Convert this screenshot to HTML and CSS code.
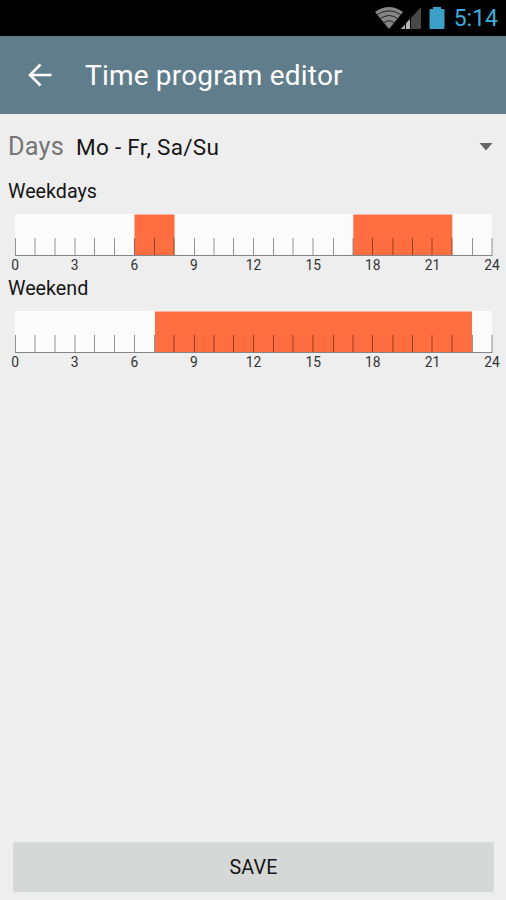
FILE: index.html
```html
<!DOCTYPE html>
<html lang="en">

<head>
    <meta charset="utf-8">
    <meta name="viewport" content="width=device-width, initial-scale=1">
    <title>Time program editor</title>
    <link rel="stylesheet" href="styles.css">
</head>

<body>
    <div class="status-bar">
        <svg class="wifi" width="28" height="22" viewBox="0 0 28 22">
            <path d="M0 5 Q14 -5 28 5 L14 22 Z" fill="#858585" />
            <path d="M1 8.500 Q14 -1 27 8.500 M4 12.500 Q14 4.500 24 12.500 M8 16.500 Q14 11 20 16.500" fill="none" stroke="#222" />
        </svg>
        <svg class="signal" width="20" height="22" viewBox="0 0 20 22">
            <path d="M20 0 V22 H0 Z" fill="#484848" />
            <path d="M9 12 V22 H0 Z" fill="#b5b5b5" />
            <path d="M4.500 15 V22 M9.500 9 V22" stroke="#000" />
        </svg>
        <svg class="battery" width="16" height="22" viewBox="0 0 16 22">
            <path d="M4 0 H12 V2 H14.500 Q15.500 2 15.500 3 V21 Q15.500 22 14.500 22 H1.500 Q0.500 22 0.500 21 V3 Q0.500 2 1.500 2 H4 Z" fill="#3c9fc8" />
        </svg>
        <span class="clock">5:14</span>
    </div>

    <header class="toolbar">
        <svg class="back" width="24" height="24" viewBox="0 0 24 24">
            <path d="M23.500 12 H2 M12.500 1.500 L2 12 L12.500 22.500" fill="none" stroke="#fff" stroke-width="2.600" />
        </svg>
        <h1>Time program editor</h1>
    </header>

    <main>
        <div class="days">
            <span class="days-label">Days</span>
            <span class="days-value">Mo - Fr, Sa/Su</span>
            <svg class="caret" width="14" height="8" viewBox="0 0 14 8">
                <path d="M0.500 0 H13.500 L7 7.500 Z" fill="#656565" />
            </svg>
        </div>

        <section class="program">
            <h2>Weekdays</h2>
            <svg class="timeline" width="478" height="43" viewBox="0 0 478 43">
                <rect width="477" height="42" fill="#fbfbfb" />
                <rect x="119.500" y="0.500" width="40" height="41.500" fill="#ff6e40" />
                <rect x="338.300" y="0.500" width="99" height="41.500" fill="#ff6e40" />
                <path class="ticks" d="M.5 24V41M20 24V41M40 24V41M60 24V41M79.500 24V41M99.500 24V41M119.500 24V41M139.500 24V41M159 24V41M179.500 24V41M199 24V41M218.500 24V41M238.500 24V41M258.500 24V41M278 24V41M298 24V41M318.500 24V41M338 24V41M357.500 24V41M378 24V41M397.500 24V41M417 24V41M437 24V41M457.500 24V41M477 24V41" />
                <path class="axis" d="M0 41.500H477.500" />
            </svg>
            <div class="hours">
                <span>0</span><span>3</span><span>6</span><span>9</span><span>12</span><span>15</span><span>18</span><span>21</span><span>24</span>
            </div>
        </section>

        <section class="program">
            <h2>Weekend</h2>
            <svg class="timeline" width="478" height="43" viewBox="0 0 478 43">
                <rect width="477" height="42" fill="#fbfbfb" />
                <rect x="140" y="0.500" width="317" height="41.500" fill="#ff6e40" />
                <path class="ticks" d="M.5 24V41M20 24V41M40 24V41M60 24V41M79.500 24V41M99.500 24V41M119.500 24V41M139.500 24V41M159 24V41M179.500 24V41M199 24V41M218.500 24V41M238.500 24V41M258.500 24V41M278 24V41M298 24V41M318.500 24V41M338 24V41M357.500 24V41M378 24V41M397.500 24V41M417 24V41M437 24V41M457.500 24V41M477 24V41" />
                <path class="axis" d="M0 41.500H477.500" />
            </svg>
            <div class="hours">
                <span>0</span><span>3</span><span>6</span><span>9</span><span>12</span><span>15</span><span>18</span><span>21</span><span>24</span>
            </div>
        </section>
    </main>

    <button class="save" type="button">SAVE</button>
</body>

</html>
```

FILE: styles.css
```css
* {
    box-sizing: border-box;
}

body {
    display: flex;
    flex-direction: column;
    height: 100vh;
    margin: 0;
    overflow: hidden;
    background: #eee;
    color: #151515;
    font-family: Roboto, "Liberation Sans", sans-serif;
}

h1,
h2 {
    margin: 0;
    font-weight: 400;
}

.status-bar {
    display: flex;
    align-items: center;
    justify-content: flex-end;
    height: 36px;
    padding: 0 8px 1px 0;
    background: #000;
}

.signal {
    margin-left: -2px;
}

.battery {
    margin: 0 9px 0 8px;
}

.clock {
    color: #3cabdc;
    font-size: 23px;
    line-height: 36px;
    padding-top: 3px;
}

.toolbar {
    display: flex;
    align-items: center;
    height: 78px;
    padding-left: 28px;
    background: #607d8b;
    color: #fff;
}

.toolbar h1 {
    margin-left: 33px;
    padding-top: 1px;
    font-size: 28px;
    letter-spacing: .2px;
}

main {
    flex: 1;
}

.days {
    display: flex;
    align-items: baseline;
    height: 62px;
    padding: 0 13px 0 8px;
    line-height: 66px;
}

.days-label {
    color: #757575;
    font-size: 25.3px;
    letter-spacing: .2px;
}

.days-value {
    margin-left: 12px;
    font-size: 22.5px;
    letter-spacing: .3px;
}

.caret {
    align-self: flex-start;
    margin: 29px 0 0 auto;
}

.program {
    height: 97px;
}

.program h2 {
    height: 38px;
    padding-left: 8px;
    font-size: 19.7px;
    line-height: 31px;
}

.timeline {
    display: block;
    margin-left: 15px;
}

.ticks {
    fill: none;
    stroke: #000;
    stroke-opacity: .42;
}

.axis {
    stroke: #858585;
}

.hours {
    display: flex;
    justify-content: space-between;
    width: 477px;
    margin-left: 15px;
    color: #333;
    font-size: 13.8px;
    line-height: 17px;
}

.hours span {
    display: flex;
    justify-content: center;
    width: 0;
}

.save {
    height: 50px;
    margin: 0 12px 8px 13px;
    padding: 1px 0 0;
    border: 0;
    border-radius: 2px;
    background: #d6d8d7;
    color: #151515;
    font: 19.7px Roboto, "Liberation Sans", sans-serif;
    letter-spacing: .2px;
}
```
